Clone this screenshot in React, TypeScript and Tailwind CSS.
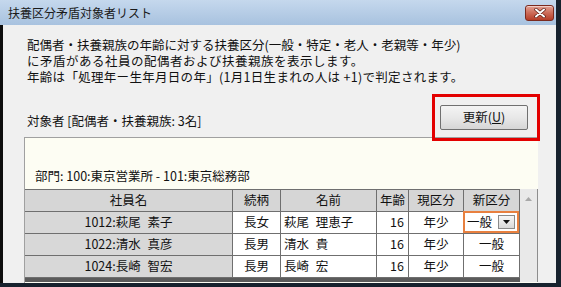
import React from 'react';

type Row = {
  emp: string;
  rel: string;
  name: string;
  age: string;
  cur: string;
  next: string;
  editing?: boolean;
};

const rows: Row[] = [
  { emp: '1012:萩尾 素子', rel: '長女', name: '萩尾 理恵子', age: '16', cur: '年少', next: '一般', editing: true },
  { emp: '1022:清水 真彦', rel: '長男', name: '清水 貴', age: '16', cur: '年少', next: '一般' },
  { emp: '1024:長崎 智宏', rel: '長男', name: '長崎 宏', age: '16', cur: '年少', next: '一般' },
];

const cols = 'grid grid-cols-[208px_48px_96px_32px_55px_56px]';
const cell = 'border-r border-b border-[#6f6f6f] flex items-center';

function CloseButton() {
  return (
    <div className="w-[29px] h-[16px] rounded-[3px] border border-[#7b2a1e] bg-gradient-to-b from-[#e3a193] via-[#cc6a57] to-[#b53c26] flex items-center justify-center shadow-[inset_0_1px_0_rgba(255,255,255,0.5)]">
      <svg width="12" height="10" viewBox="0 0 12 10">
        <path d="M2 1.5 L10 8.5 M10 1.5 L2 8.5" stroke="#5a1b12" strokeWidth="3.4" strokeLinecap="round" />
        <path d="M2 1.5 L10 8.5 M10 1.5 L2 8.5" stroke="#ffffff" strokeWidth="2" strokeLinecap="round" />
      </svg>
    </div>
  );
}

function ComboCell({ value }: { value: string }) {
  return (
    <div className="h-full w-full border-2 border-[#e8803f] bg-white flex items-center justify-between pl-[2px] pr-[2px]">
      <span>{value}</span>
      <div className="w-[17px] h-[14px] border border-[#8a8a8a] bg-gradient-to-b from-[#f7f7f7] to-[#d9d9d9] flex items-center justify-center">
        <svg width="7" height="4" viewBox="0 0 7 4">
          <path d="M0 0 L7 0 L3.5 4 Z" fill="#111" />
        </svg>
      </div>
    </div>
  );
}

export default function App() {
  return (
    <div className="w-[561px] h-[287px] flex flex-col bg-[#f0f0f0] border-r-[5px] border-b-[4px] border-[#17222e] text-[#111] font-['Noto_Sans_CJK_JP','Noto_Sans_CJK_SC',sans-serif]">
      {/* Title bar */}
      <div className="h-[25px] flex items-center justify-between pl-[8px] pr-[2px] bg-gradient-to-b from-[#c5d8ed] to-[#a8c2df]">
        <span className="text-[12px] leading-none text-[#1a1a1a]">扶養区分矛盾対象者リスト</span>
        <CloseButton />
      </div>

      {/* Body */}
      <div className="flex-1 flex flex-col border-l-[3px] border-[#0d0d0d] min-h-0">
        <div className="pt-[12px] pl-[24px] text-[12.5px] leading-[16px]">
          <p>配偶者・扶養親族の年齢に対する扶養区分(一般・特定・老人・老親等・年少)</p>
          <p className="tracking-[0.5px]">に矛盾がある社員の配偶者および扶養親族を表示します。</p>
          <p className="tracking-[0.3px]">年齢は「処理年ー生年月日の年」(1月1日生まれの人は +1)で判定されます。</p>
        </div>

        <div className="mt-[20px] pl-[24px] pr-[28px] flex items-end justify-between">
          <span className="text-[12.5px] leading-[15px] pb-[2px]">対象者 [配偶者・扶養親族: 3名]</span>
          <div className="relative">
            <button className="w-[88px] h-[25px] rounded-[2px] border border-[#707070] bg-gradient-to-b from-[#f4f4f4] via-[#e8e8e8] to-[#d6d6d6] text-[12.5px] leading-none flex items-center justify-center">
              更新(<span className="underline">U</span>)
            </button>
            <span className="absolute -left-[8px] -right-[12px] -top-[11px] -bottom-[11px] border-[3px] border-[#e30000] z-10 pointer-events-none" />
          </div>
        </div>

        {/* Panel */}
        <div className="mt-[7px] ml-[21px] mr-[18px] flex-1 flex flex-col bg-[#fdfdf3] border-t border-l border-[#a0a0a0] min-h-0">
          <div className="pt-[30px] pl-[10px] mb-[6px] text-[12.5px] leading-[15px]">部門: 100:東京営業所 - 101:東京総務部</div>

          <div className="flex text-[12.5px] leading-none">
            <div className="flex flex-col">
              <div className={`${cols} h-[23px] border-t border-[#6f6f6f] bg-[#d6d6d6]`}>
                {['社員名', '続柄', '名前', '年齢', '現区分', '新区分'].map((h) => (
                  <div key={h} className={`${cell} justify-center`}>{h}</div>
                ))}
              </div>
              {rows.map((r) => (
                <div key={r.emp} className={`${cols} h-[22px] [word-spacing:4px]`}>
                  <div className={`${cell} justify-center bg-[#d8d8d8]`}>{r.emp}</div>
                  <div className={`${cell} justify-center bg-white`}>{r.rel}</div>
                  <div className={`${cell} pl-[3px] bg-white`}>{r.name}</div>
                  <div className={`${cell} justify-end pr-[4px] bg-white`}>{r.age}</div>
                  <div className={`${cell} justify-center bg-white`}>{r.cur}</div>
                  {r.editing ? (
                    <div className="border-b border-r border-[#6f6f6f] -mt-[1px] -ml-[1px] h-[23px]">
                      <ComboCell value={r.next} />
                    </div>
                  ) : (
                    <div className={`${cell} justify-center bg-white`}>{r.next}</div>
                  )}
                </div>
              ))}
              <div className="h-[4px] bg-[#5b5b5b]" />
            </div>
            {/* Scrollbar column */}
            <div className="w-[18px] bg-[#e9e9e9] border-r border-[#8d8d8d] flex justify-center pt-[8px]">
              <svg width="7" height="4" viewBox="0 0 7 4">
                <path d="M3.5 0 L7 4 L0 4 Z" fill="#a8a8a8" />
              </svg>
            </div>
          </div>
        </div>
      </div>
    </div>
  );
}
